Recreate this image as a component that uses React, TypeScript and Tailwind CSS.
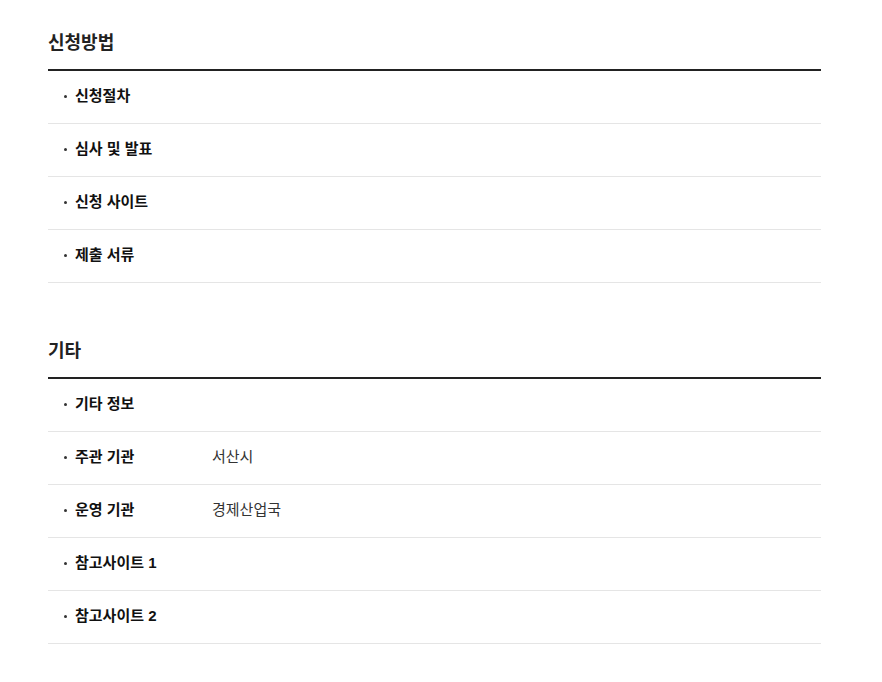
import React from "react";

type Row = { label: string; value?: string };

const sections: { title: string; rows: Row[] }[] = [
  {
    title: "신청방법",
    rows: [
      { label: "신청절차" },
      { label: "심사 및 발표" },
      { label: "신청 사이트" },
      { label: "제출 서류" },
    ],
  },
  {
    title: "기타",
    rows: [
      { label: "기타 정보" },
      { label: "주관 기관", value: "서산시" },
      { label: "운영 기관", value: "경제산업국" },
      { label: "참고사이트 1" },
      { label: "참고사이트 2" },
    ],
  },
];

export default function App() {
  return (
    <div
      className="w-[882px] min-h-[682px] bg-white pt-[29px] pl-[48px]"
      style={{ fontFamily: '"Liberation Sans", "Noto Sans CJK KR", sans-serif' }}
    >
      <div className="w-[773px] flex flex-col gap-[54px]">
        {sections.map((s) => (
          <section key={s.title}>
            <h2 className="h-[27px] pt-[1px] text-[18px] leading-[27px] font-bold text-[#222] mb-[13px]">
              {s.title}
            </h2>
            <div className="border-t-2 border-[#222]">
              {s.rows.map((r) => (
                <div
                  key={r.label}
                  className="h-[53px] pb-[2px] border-b border-[#e5e5e5] flex items-center text-[15px] leading-[22px]"
                >
                  <div className="w-[164px] flex items-center pl-[16px] font-bold text-[#111]">
                    <span className="w-[3px] h-[3px] rounded-full bg-[#333] mr-[8px]" />
                    <span>{r.label}</span>
                  </div>
                  {r.value && <div className="text-[#333]">{r.value}</div>}
                </div>
              ))}
            </div>
          </section>
        ))}
      </div>
    </div>
  );
}
